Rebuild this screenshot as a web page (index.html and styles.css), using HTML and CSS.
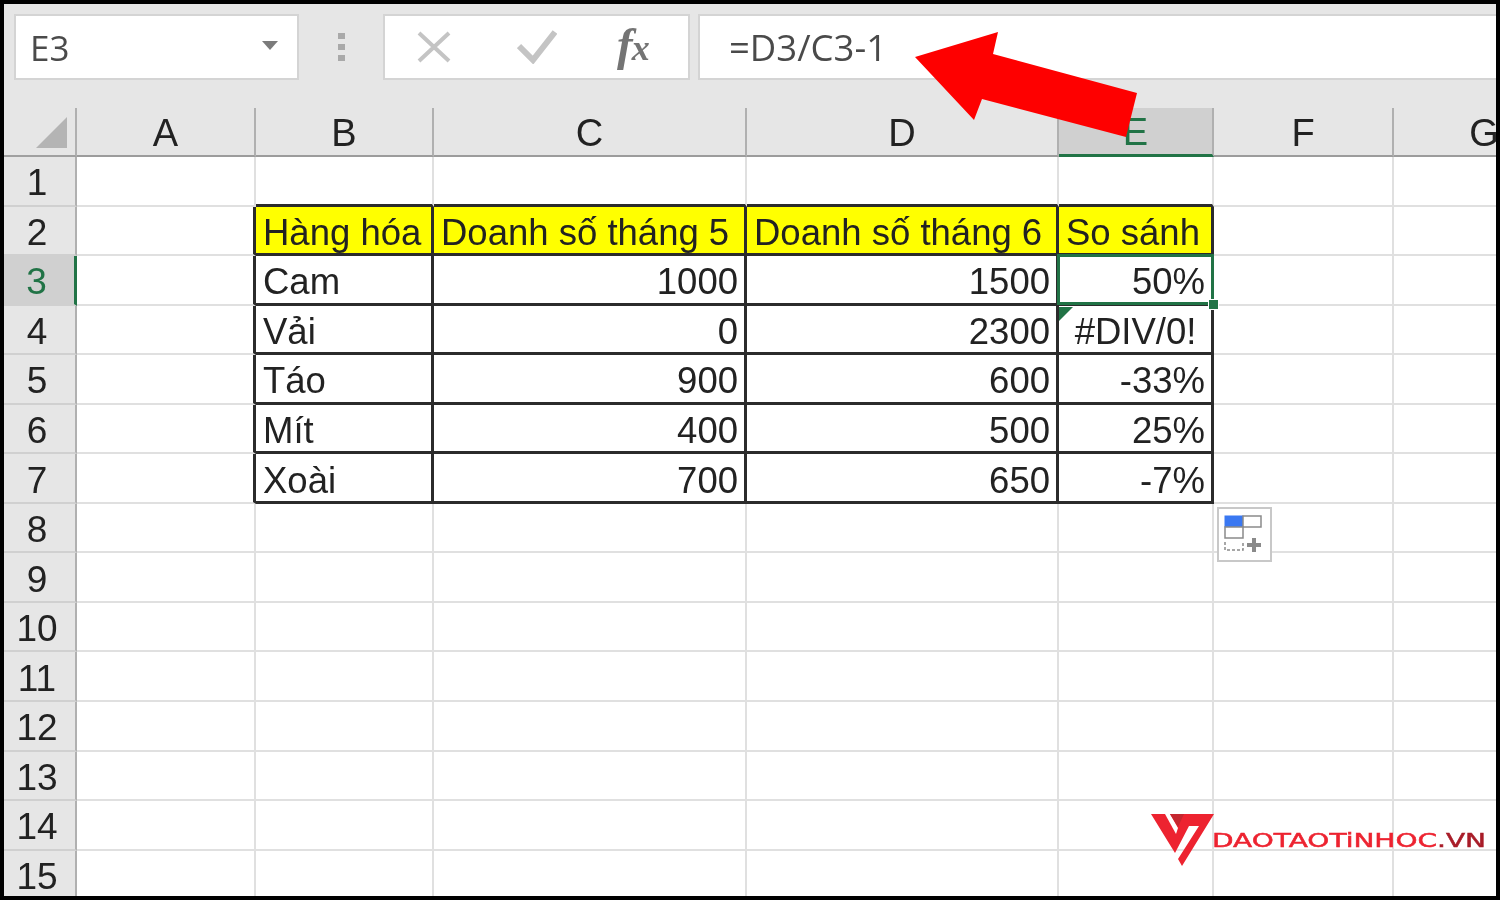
FILE: index.html
```html
<!DOCTYPE html>
<html lang="vi">
<head>
    <meta charset="UTF-8">
    <title>Excel - So sánh doanh số</title>
    <link rel="stylesheet" href="styles.css">
</head>
<body>
    <div class="frame">
        <div class="screen">
            <!-- Thanh cong thuc -->
            <div class="formula-bar">
                <div class="name-box">
                    <span>E3</span>
                    <svg class="caret" width="16" height="9" viewBox="0 0 16 9"><path d="M0 0H16L8 9Z" fill="#7b7b7b"/></svg>
                </div>
                <div class="grip"><i></i><i></i><i></i></div>
                <div class="buttons">
                    <svg class="btn-x" width="34" height="32" viewBox="0 0 34 32"><path d="M2 2L32 30M32 2L2 30" stroke="#c4c4c4" stroke-width="4" fill="none"/></svg>
                    <svg class="btn-ok" width="40" height="34" viewBox="0 0 40 34"><path d="M2 16L16 30L38 2" stroke="#c4c4c4" stroke-width="6" fill="none"/></svg>
                    <span class="fx">f<span class="fx-x">x</span></span>
                </div>
                <div class="formula">=D3/C3-1</div>
            </div>

            <!-- Bang tinh -->
            <div class="sheet">
                <div class="corner"><svg width="31" height="31" viewBox="0 0 31 31"><path d="M31 0V31H0Z" fill="#b4b4b4"/></svg></div>
                <div class="col">A</div><div class="col">B</div><div class="col">C</div><div class="col">D</div><div class="col col-active">E</div><div class="col">F</div><div class="col col-last">G</div>

                <div class="row">1</div><div class="c"></div><div class="c dark-b"></div><div class="c dark-b"></div><div class="c dark-b"></div><div class="c dark-b"></div><div class="c"></div><div class="c"></div>
                <div class="row">2</div><div class="c dark-r"></div><div class="c box head">Hàng hóa</div><div class="c box head">Doanh số tháng 5</div><div class="c box head">Doanh số tháng 6</div><div class="c box head">So sánh</div><div class="c"></div><div class="c"></div>
                <div class="row row-active">3</div><div class="c dark-r"></div><div class="c box">Cam</div><div class="c box num">1000</div><div class="c box num">1500</div><div class="c box num sel">50%<span class="handle"></span></div><div class="c"></div><div class="c"></div>
                <div class="row">4</div><div class="c dark-r"></div><div class="c box">Vải</div><div class="c box num">0</div><div class="c box num">2300</div><div class="c box err">#DIV/0!</div><div class="c"></div><div class="c"></div>
                <div class="row">5</div><div class="c dark-r"></div><div class="c box">Táo</div><div class="c box num">900</div><div class="c box num">600</div><div class="c box num">-33%</div><div class="c"></div><div class="c"></div>
                <div class="row">6</div><div class="c dark-r"></div><div class="c box">Mít</div><div class="c box num">400</div><div class="c box num">500</div><div class="c box num">25%</div><div class="c"></div><div class="c"></div>
                <div class="row">7</div><div class="c dark-r"></div><div class="c box">Xoài</div><div class="c box num">700</div><div class="c box num">650</div><div class="c box num">-7%</div><div class="c"></div><div class="c"></div>
                <div class="row">8</div><div class="c"></div><div class="c"></div><div class="c"></div><div class="c"></div><div class="c"></div><div class="c"></div><div class="c"></div>
                <div class="row">9</div><div class="c"></div><div class="c"></div><div class="c"></div><div class="c"></div><div class="c"></div><div class="c"></div><div class="c"></div>
                <div class="row">10</div><div class="c"></div><div class="c"></div><div class="c"></div><div class="c"></div><div class="c"></div><div class="c"></div><div class="c"></div>
                <div class="row">11</div><div class="c"></div><div class="c"></div><div class="c"></div><div class="c"></div><div class="c"></div><div class="c"></div><div class="c"></div>
                <div class="row">12</div><div class="c"></div><div class="c"></div><div class="c"></div><div class="c"></div><div class="c"></div><div class="c"></div><div class="c"></div>
                <div class="row">13</div><div class="c"></div><div class="c"></div><div class="c"></div><div class="c"></div><div class="c"></div><div class="c"></div><div class="c"></div>
                <div class="row">14</div><div class="c"></div><div class="c"></div><div class="c"></div><div class="c"></div><div class="c"></div><div class="c"></div><div class="c"></div>
                <div class="row">15</div><div class="c"></div><div class="c"></div><div class="c"></div><div class="c"></div><div class="c"></div><div class="c"></div><div class="c"></div>
            </div>
        </div>

        <!-- Nut Quick Analysis -->
        <div class="quick">
            <svg width="42" height="40" viewBox="0 0 42 40">
                <rect x="1" y="1" width="18" height="11" fill="#3a78f2" stroke="#3a78f2"/>
                <rect x="19" y="1" width="18" height="11" fill="#fff" stroke="#8a8a8a" stroke-width="1.5"/>
                <rect x="1" y="12" width="18" height="11" fill="#fff" stroke="#8a8a8a" stroke-width="1.5"/>
                <path d="M1 27V35H19V27" fill="none" stroke="#8a8a8a" stroke-width="1.5" stroke-dasharray="3 2"/>
                <path d="M30 23V37M23 30H37" stroke="#8a8a8a" stroke-width="4" fill="none"/>
            </svg>
        </div>

        <!-- Mui ten do -->
        <svg class="arrow" width="1500" height="900" viewBox="0 0 1500 900"><path d="M915 57L998 32L993 54L1137 93L1126 137L982 99L974 120Z" fill="#fe0000"/></svg>

        <!-- Logo -->
        <div class="logo">
            <svg width="64" height="54" viewBox="0 0 64 54">
                <path d="M0 0H63L31 52L27 45L48 12H38L24 39Z" fill="#ed2330"/>
                <path d="M14 0H19L27 14L25 20Z" fill="#fff"/>
                <path d="M19 0H33L27 13Z" fill="#c5272f"/>
            </svg>
            <span class="logo-text">DAOTAOTiNHOC<b>.VN</b></span>
        </div>
    </div>
</body>
</html>
```
FILE: styles.css
```css
* {
    box-sizing: border-box;
}

body {
    margin: 0;
    background-color: #000;
    font-family: "Liberation Sans", Arial, sans-serif;
}

.frame {
    position: relative;
    width: 1500px;
    height: 900px;
    padding: 4px;
    background-color: #000;
}

.screen {
    height: 892px;
    overflow: hidden;
    background-color: #fff;
}

.formula-bar {
    display: flex;
    align-items: stretch;
    height: 104px;
    padding: 10px 0 28px 10px;
    background-color: #e6e6e6;
    filter: blur(0.6px);
}

.name-box {
    display: flex;
    align-items: center;
    justify-content: space-between;
    width: 285px;
    padding: 0 19px 0 14px;
    background-color: #fff;
    border: 2px solid #d4d4d4;
    font-family: "Open Sans", sans-serif;
    font-size: 35px;
    color: #4a4a4a;
}

.caret {
    margin-top: -4px;
}

.grip {
    display: flex;
    flex-direction: column;
    justify-content: center;
    gap: 5px;
    width: 84px;
    align-items: center;
}

.grip i {
    width: 7px;
    height: 6px;
    background-color: #a9a9a9;
}

.buttons {
    display: flex;
    align-items: center;
    width: 307px;
    padding-left: 32px;
    background-color: #fff;
    border: 2px solid #d4d4d4;
}

.btn-ok {
    margin-left: 66px;
}

.fx {
    margin: -6px 0 0 60px;
    font-family: "Liberation Serif", serif;
    font-style: italic;
    font-weight: 700;
    font-size: 47px;
    line-height: 1;
    color: #747474;
}

.fx-x {
    margin-left: -1px;
    font-size: 36px;
}

.formula {
    flex: 1;
    margin-left: 8px;
    padding-left: 29px;
    display: flex;
    align-items: center;
    background-color: #fff;
    border-top: 2px solid #d4d4d4;
    border-bottom: 2px solid #d4d4d4;
    border-left: 2px solid #d4d4d4;
    font-family: "Open Sans", sans-serif;
    font-size: 36.5px;
    color: #4a4a4a;
}

.sheet {
    display: grid;
    grid-template-columns: 73px 179px 178px 313px 312px 155px 180px 180px;
    grid-template-rows: 49px repeat(15, 49.55px);
    width: 1570px;
    background-color: #fff;
    filter: blur(0.6px);
}

.corner {
    display: flex;
    align-items: flex-end;
    justify-content: flex-end;
    padding: 0 8px 7px 0;
    background-color: #e6e6e6;
    border-right: 2px solid #b0b0b0;
    border-bottom: 2px solid #a0a0a0;
}

.col {
    display: flex;
    align-items: center;
    justify-content: center;
    padding-top: 3px;
    background-color: #e6e6e6;
    border-right: 2px solid #b0b0b0;
    border-bottom: 2px solid #9c9c9c;
    font-size: 38px;
    color: #222;
}

.col-active {
    background-color: #d0d0d0;
    border-bottom: 3px solid #217346;
    color: #217346;
}

.col-last {
    border-right: none;
}

.row {
    display: flex;
    align-items: center;
    justify-content: center;
    padding: 5px 5px 0 0;
    background-color: #e6e6e6;
    border-right: 2px solid #b0b0b0;
    border-bottom: 2px solid #d0d0d0;
    font-size: 37px;
    color: #222;
}

.row-active {
    background-color: #d0d0d0;
    border-right: 3px solid #217346;
    color: #217346;
}

.c {
    position: relative;
    display: flex;
    align-items: center;
    padding: 6px 6px 0 7px;
    border-right: 2px solid #e0e0e0;
    border-bottom: 2px solid #e0e0e0;
    font-size: 36.5px;
    white-space: nowrap;
    color: #222;
}

.dark-r {
    border-right: 3px solid #2b2b2b;
}

.dark-b {
    border-bottom: 3px solid #2b2b2b;
}

.box {
    border-right: 3px solid #2b2b2b;
    border-bottom: 3px solid #2b2b2b;
}

.head {
    background-color: #ffff00;
}

.num {
    justify-content: flex-end;
}

.sel::after {
    content: "";
    position: absolute;
    left: -2px;
    top: -2px;
    right: -3px;
    bottom: -2px;
    border: 3px solid #217346;
}

.handle {
    position: absolute;
    right: -8px;
    bottom: -7px;
    z-index: 1;
    width: 11px;
    height: 11px;
    background-color: #217346;
    border: 1px solid #fff;
}

.err {
    justify-content: center;
}

.err::before {
    content: "";
    position: absolute;
    left: 0;
    top: 1px;
    border-top: 14px solid #217346;
    border-right: 14px solid transparent;
}

.quick {
    position: absolute;
    left: 1217px;
    top: 507px;
    width: 55px;
    height: 55px;
    display: flex;
    align-items: center;
    justify-content: center;
    background-color: #fff;
    border: 2px solid #c8c8c8;
    filter: blur(0.5px);
}

.arrow {
    position: absolute;
    left: 0;
    top: 0;
}

.logo {
    position: absolute;
    left: 1151px;
    top: 814px;
    display: flex;
    align-items: flex-start;
}

.logo-text {
    margin: 14px 0 0 -3px;
    font-family: "DejaVu Sans", sans-serif;
    font-size: 20px;
    font-weight: 400;
    line-height: 24px;
    white-space: nowrap;
    color: #ed2330;
    -webkit-text-stroke: 0.5px #ed2330;
    transform: scaleX(1.4);
    transform-origin: left center;
}

.logo-text b {
    font-weight: 400;
    color: #a81c28;
    -webkit-text-stroke: 0.5px #a81c28;
}
```
